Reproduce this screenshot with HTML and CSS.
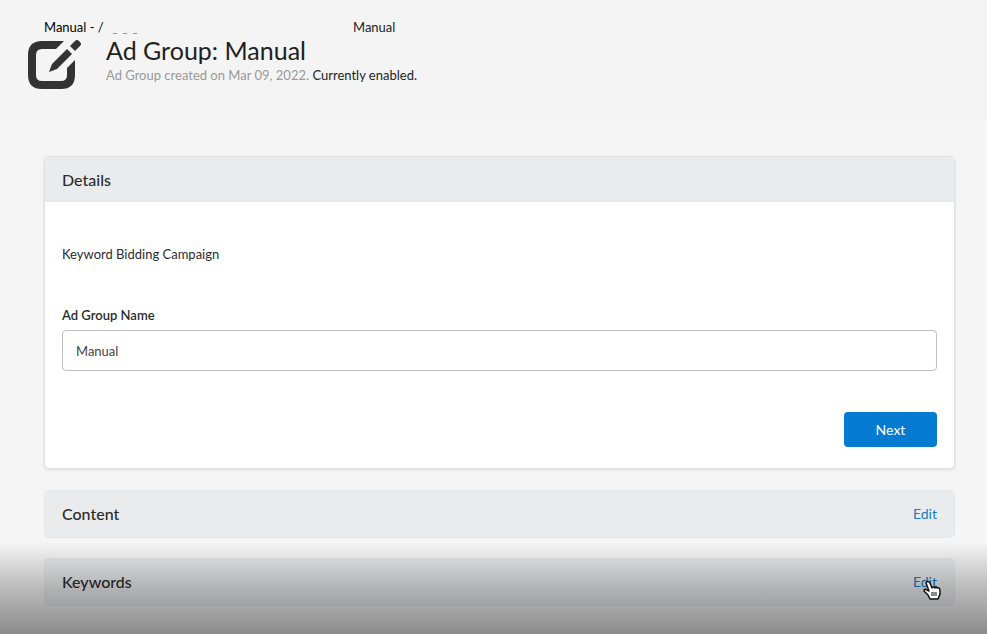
FILE: index.html
```html
<!DOCTYPE html>
<html lang="en">
<head>
<meta charset="utf-8">
<title>Ad Group: Manual</title>
<link rel="stylesheet" href="styles.css">
</head>
<body>
<header class="page-header">
  <nav class="crumbs" aria-label="Breadcrumb">
    <span class="crumb-first">Manual - /</span>
    <span class="crumb-rest" aria-hidden="true"><i></i><i></i><i></i></span>
    <span class="crumb-current">Manual</span>
  </nav>
  <div class="heading">
    <svg class="edit-icon" viewBox="0 0 54 50" aria-hidden="true">
      <path d="M36 1H14Q0 1 0 15V35Q0 49 14 49H33Q47 49 47 35V20L39 28V35Q39 41 33 41H14Q8 41 8 35V15Q8 9 14 9H28Z" fill="#333"/>
      <path d="M21 32L24 24 39 9 44 14 29 29Z" fill="#333"/>
      <path d="M42 6L47 1Q49-1 51 1L52 2Q54 4 52 6L47 11Z" fill="#333"/>
    </svg>
    <div>
      <h1>Ad Group: Manual</h1>
      <p class="subtitle">Ad Group created on Mar 09, 2022. <span>Currently enabled.</span></p>
    </div>
  </div>
</header>
<main class="sections">
  <section class="card">
    <h2 class="card-title">Details</h2>
    <form class="card-body">
      <p class="campaign">Keyword Bidding Campaign</p>
      <label for="group-name">Ad Group Name</label>
      <input id="group-name" type="text" value="Manual">
      <button class="next" type="button">Next</button>
    </form>
  </section>
  <section class="row">
    <h2>Content</h2>
    <a href="#content">Edit</a>
  </section>
  <section class="row">
    <h2>Keywords</h2>
    <a href="#keywords">Edit</a>
  </section>
</main>
<div class="fade"></div>
<svg class="pointer" viewBox="0 0 18 20" aria-hidden="true">
  <path d="M3 3Q5 0 7 3L9 8Q10 6 12 8Q13 6 14 8Q17 7 17 11V14L15 19H7L5 15 1 11Q1 8 4 10L6 11Z" fill="#fff" stroke="#111" stroke-width="1.500" stroke-linejoin="round"/>
  <path d="M9 12V16M11 12V16M13 12V16" stroke="#111" fill="none"/>
</svg>
</body>
</html>
```
FILE: styles.css
```css
* { box-sizing: border-box; }
body {
  margin: 0;
  min-height: 100vh;
  position: relative;
  background: #f5f5f5;
  color: #2a2c2e;
  font-family: Lato, "Liberation Sans", sans-serif;
  font-size: 13px;
  line-height: 20px;
}
h1, h2, p { margin: 0; font-weight: 400; }
a { color: #187bc4; font-size: 14px; text-decoration: none; }
.page-header {
  padding: 17px 28px 31px;
  background: #f4f4f4;
}
.crumbs {
  display: flex;
  padding-left: 16px;
  height: 20px;
}
.crumb-first {
  width: 64px;
  white-space: nowrap;
  color: #000;
}
.crumb-rest {
  display: flex;
  align-items: flex-end;
  gap: 6px;
  width: 245px;
  padding: 0 0 3px 5px;
}
.crumb-rest i { width: 4px; height: 1px; background: #999; }
.crumb-current { color: #222; }
.heading { display: flex; gap: 24px; }
.edit-icon { width: 54px; height: 50px; margin-top: 3px; overflow: visible; }
h1 { font-size: 25px; line-height: 26px; color: #1f1f1f; }
.subtitle { margin-top: 2px; color: #999; }
.subtitle span { color: #222; }
.sections { padding: 35px 32px 28px 44px; }
.card {
  margin-bottom: 21px;
  border: 1px solid #e0e1e2;
  border-radius: 5px;
  background: #fff;
  box-shadow: 0 1px 2px 1px rgba(0, 0, 0, 0.06);
}
.card-title {
  padding: 13px 17px 12px;
  border-radius: 4px 4px 0 0;
  background: #eaebed;
}
h2 { font-size: 16px; font-weight: 500; }
.card-body {
  display: flex;
  flex-direction: column;
  padding: 42px 17px 21px;
}
.campaign { margin-bottom: 41px; }
label { font-weight: 600; margin-bottom: 5px; }
input {
  width: 100%;
  height: 41px;
  padding: 0 13px;
  border: 1px solid #bfbfbf;
  border-radius: 4px;
  background: #fff;
  color: #444;
  font: inherit;
}
.next {
  align-self: flex-end;
  width: 93px;
  height: 35px;
  margin-top: 41px;
  border: 0;
  border-radius: 4px;
  background: #047bd0;
  color: #fff;
  font: inherit;
  font-size: 14px;
}
.row {
  display: flex;
  align-items: center;
  justify-content: space-between;
  height: 48px;
  padding: 0 17px;
  border: 1px solid #e6e7e8;
  border-radius: 5px;
  background: #eaebed;
}
.row + .row { margin-top: 20px; }
.fade {
  position: absolute;
  inset: auto 0 0;
  height: 92px;
  background: linear-gradient(transparent, rgba(0, 0, 0, 0.24) 50%, rgba(0, 0, 0, 0.43));
  pointer-events: none;
}
.pointer {
  position: absolute;
  right: 46px;
  bottom: 34px;
  width: 18px;
  height: 20px;
}
```
